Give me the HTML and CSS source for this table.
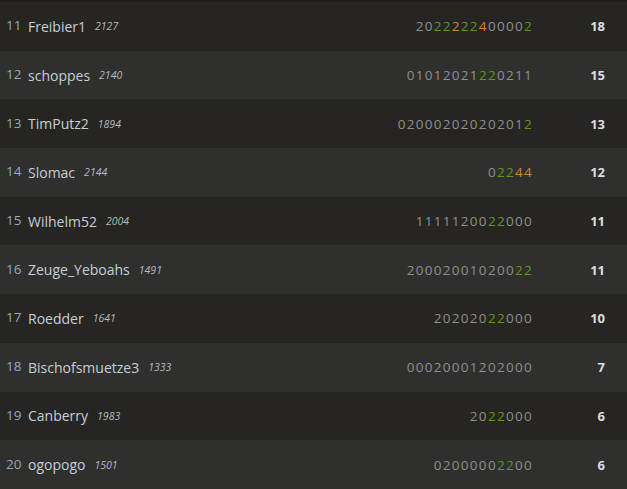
FILE: index.html
```html
<!DOCTYPE html>
<html lang="en">
<head>
  <meta charset="UTF-8">
  <title>Tabelle</title>
  <link rel="stylesheet" href="styles.css">
</head>
<body>

<div class="table">
  <div class="row">
    <span class="rank">11</span>
    <span class="name">Freibier1</span><span class="rating">2127</span>
    <span class="form">20<b class="g">22</b><b class="o">2</b><b class="g">22</b><b class="o">4</b>0000<b class="g">2</b></span>
    <span class="pts">18</span>
  </div>
  <div class="row">
    <span class="rank">12</span>
    <span class="name">schoppes</span><span class="rating">2140</span>
    <span class="form">01012021<b class="g">22</b>0211</span>
    <span class="pts">15</span>
  </div>
  <div class="row">
    <span class="rank">13</span>
    <span class="name">TimPutz2</span><span class="rating">1894</span>
    <span class="form">02000202020201<b class="g">2</b></span>
    <span class="pts">13</span>
  </div>
  <div class="row">
    <span class="rank">14</span>
    <span class="name">Slomac</span><span class="rating">2144</span>
    <span class="form">0<b class="g">22</b><b class="o">44</b></span>
    <span class="pts">12</span>
  </div>
  <div class="row">
    <span class="rank">15</span>
    <span class="name">Wilhelm52</span><span class="rating">2004</span>
    <span class="form">11111200<b class="g">22</b>000</span>
    <span class="pts">11</span>
  </div>
  <div class="row">
    <span class="rank">16</span>
    <span class="name">Zeuge_Yeboahs</span><span class="rating">1491</span>
    <span class="form">200020010200<b class="g">22</b></span>
    <span class="pts">11</span>
  </div>
  <div class="row">
    <span class="rank">17</span>
    <span class="name">Roedder</span><span class="rating">1641</span>
    <span class="form">202020<b class="g">22</b>000</span>
    <span class="pts">10</span>
  </div>
  <div class="row">
    <span class="rank">18</span>
    <span class="name">Bischofsmuetze3</span><span class="rating">1333</span>
    <span class="form">00020001202000</span>
    <span class="pts">7</span>
  </div>
  <div class="row">
    <span class="rank">19</span>
    <span class="name">Canberry</span><span class="rating">1983</span>
    <span class="form">20<b class="g">22</b>000</span>
    <span class="pts">6</span>
  </div>
  <div class="row">
    <span class="rank">20</span>
    <span class="name">ogopogo</span><span class="rating">1501</span>
    <span class="form">0200000<b class="g">22</b>00</span>
    <span class="pts">6</span>
  </div>
</div>

</body>
</html>
```

FILE: styles.css
```css
body {
  margin: 0;
  padding-top: 2px;
  background-color: #1e1d1b;
  font-family: "Open Sans", "Noto Sans", sans-serif;
  font-size: 14px;
}

.row {
  display: flex;
  align-items: center;
  height: 48.7px;
  background-color: #262522;
}

.row:nth-child(even) {
  background-color: #2f2f2e;
}

.rank {
  width: 22px;
  padding-left: 6px;
  color: #93a9bf;
  font-size: 13.5px;
  margin-bottom: 2px;
}

.name {
  color: #c6ced6;
}

.rating {
  margin-left: 9px;
  color: #b4b9bf;
  font-size: 10.5px;
  font-style: italic;
}

.form {
  margin-left: auto;
  color: #8d8f92;
  letter-spacing: 1.3px;
  font-size: 13.5px;
}

.form b {
  font-weight: normal;
}

.g {
  color: #5d9b1d;
}

.o {
  color: #cf8922;
}

.pts {
  width: 72px;
  padding-right: 22px;
  text-align: right;
  color: #d9dee4;
  font-weight: bold;
  font-size: 13px;
}
```
